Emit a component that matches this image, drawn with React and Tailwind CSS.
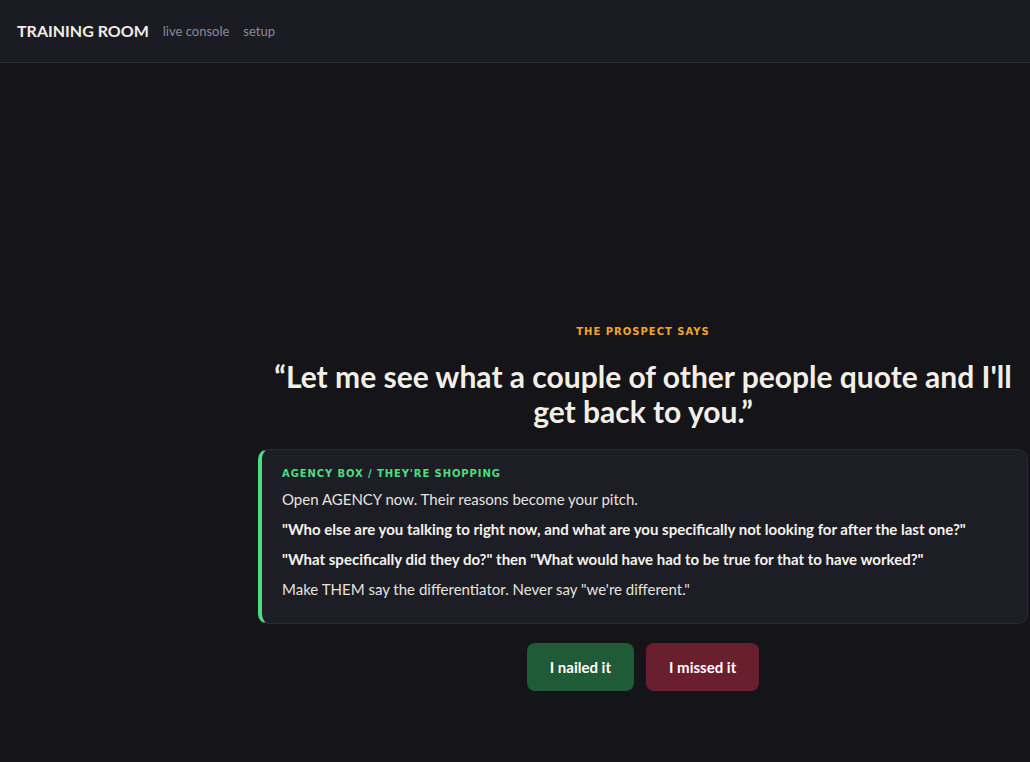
import React from 'react';

const font = { fontFamily: 'Lato, "Noto Sans", sans-serif' };
const labelFont = { fontFamily: '"DejaVu Sans", sans-serif' };

function Header() {
  return (
    <header className="h-[63px] flex items-center gap-[14px] px-[17px] bg-[#1b1b23] border-b border-[#2a2a35]">
      <div className="text-[16px] font-bold text-[#f1ede6]">TRAINING ROOM</div>
      <nav className="flex items-center gap-[14px] text-[13px] text-[#8b8a99] mt-[1px]">
        <span>live console</span>
        <span>setup</span>
      </nav>
    </header>
  );
}

function AgencyBox() {
  return (
    <div className="w-full rounded-[10px] border border-[#2a2a35] border-l-4 border-l-[#4ade80] bg-[#1d1d26] pl-[20px] pr-4 pt-4 pb-[15px]">
      <div className="text-[10px] font-bold tracking-[0.09em] text-[#4ade80] leading-4 mb-[6px]" style={labelFont}>
        AGENCY BOX / THEY'RE SHOPPING
      </div>
      <p className="text-[15px] leading-[22px] mb-2 text-[#e6e3dd]">Open AGENCY now. Their reasons become your pitch.</p>
      <p className="text-[15px] leading-[22px] mb-2 font-bold text-[#f5f2ec]">"Who else are you talking to right now, and what are you specifically not looking for after the last one?"</p>
      <p className="text-[15px] leading-[22px] mb-2 font-bold text-[#f5f2ec]">"What specifically did they do?" then "What would have had to be true for that to have worked?"</p>
      <p className="text-[15px] leading-[22px] mb-2 text-[#e6e3dd]">Make THEM say the differentiator. Never say "we're different."</p>
    </div>
  );
}

export default function App() {
  return (
    <div className="min-h-[762px] bg-[#141419] text-[#f1ede6]" style={font}>
      <Header />
      <div className="flex">
        <div className="w-[258px] shrink-0" />
        <main className="flex-1 pr-[2px] pt-[261px] flex flex-col items-center">
          <div className="text-[10px] font-bold tracking-[0.1em] text-[#f5a524] leading-4" style={labelFont}>
            THE PROSPECT SAYS
          </div>
          <h1 className="mt-[19px] max-w-[765px] text-[30px] leading-[35px] font-bold text-center text-[#f3efe7]">
            “Let me see what a couple of other people quote and I'll get back to you.”
          </h1>
          <div className="mt-[20px] w-full">
            <AgencyBox />
          </div>
          <div className="mt-[19px] flex gap-3">
            <button className="h-12 px-[23px] rounded-lg bg-[#1f5b36] text-white text-[15px] font-bold">I nailed it</button>
            <button className="h-12 px-[23px] rounded-lg bg-[#6a1f2f] text-white text-[15px] font-bold">I missed it</button>
          </div>
        </main>
      </div>
    </div>
  );
}
